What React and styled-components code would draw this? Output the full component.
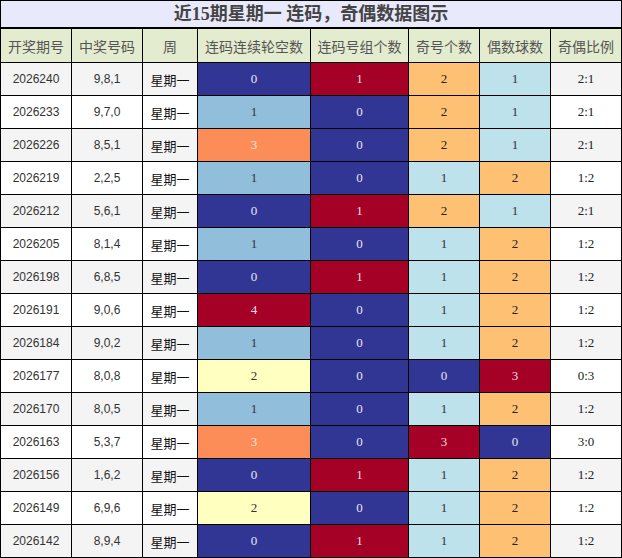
import React from 'react';
import styled, { createGlobalStyle } from 'styled-components';

const GlobalStyle = createGlobalStyle`
    body {
        margin: 0;
        background: #fff;
        font-family: "Liberation Sans", "Noto Sans CJK SC", sans-serif;
    }
`

const colors = {
    blue: { bg: '#313695', fg: '#e6e6f0' },
    sky: { bg: '#91bfdb', fg: '#333' },
    orange: { bg: '#fc8d59', fg: '#f4e4dc' },
    red: { bg: '#a50026', fg: '#eedfe2' },
    yellow: { bg: '#ffffbf', fg: '#333' },
    peach: { bg: '#fec173', fg: '#222' },
    pale: { bg: '#bde2ec', fg: '#333' },
}

// gap count -> colour
const gapColor = { 0: 'blue', 1: 'sky', 2: 'yellow', 3: 'orange', 4: 'red' }
const groupColor = { 0: 'blue', 1: 'red' }
const countColor = { 0: 'blue', 1: 'pale', 2: 'peach', 3: 'red' }

const rows = [
    ['2026240', '9,8,1', 0, 1, 2, 1],
    ['2026233', '9,7,0', 1, 0, 2, 1],
    ['2026226', '8,5,1', 3, 0, 2, 1],
    ['2026219', '2,2,5', 1, 0, 1, 2],
    ['2026212', '5,6,1', 0, 1, 2, 1],
    ['2026205', '8,1,4', 1, 0, 1, 2],
    ['2026198', '6,8,5', 0, 1, 1, 2],
    ['2026191', '9,0,6', 4, 0, 1, 2],
    ['2026184', '9,0,2', 1, 0, 1, 2],
    ['2026177', '8,0,8', 2, 0, 0, 3],
    ['2026170', '8,0,5', 1, 0, 1, 2],
    ['2026163', '5,3,7', 3, 0, 3, 0],
    ['2026156', '1,6,2', 0, 1, 1, 2],
    ['2026149', '6,9,6', 2, 0, 1, 2],
    ['2026142', '8,9,4', 0, 1, 1, 2],
]

const headers = ['开奖期号', '中奖号码', '周', '连码连续轮空数', '连码号组个数', '奇号个数', '偶数球数', '奇偶比例']
const widths = [71, 71, 55, 113, 98, 71, 71, 71]

const Table = styled.table`
    width: 622px;
    table-layout: fixed;
    border-collapse: collapse;
    border: 1px solid #000;
`

const TitleCell = styled.td`
    height: 26px;
    padding: 0;
    background: #e8e9fb;
    border-bottom: 2px solid #000;
    text-align: center;
    font-family: "Liberation Serif", "Noto Sans CJK SC", serif;
    font-weight: bold;
    font-size: 18px;
    color: #444;
    line-height: 25px;
`

const Th = styled.td`
    height: 33px;
    padding: 0;
    background: #e4ecd0;
    border: 1px solid #000;
    text-align: center;
    font-size: 14px;
    color: #555;
    font-weight: normal;
`

const Tr = styled.tr`
    background: ${(p) => (p.$odd ? '#f4f4f4' : '#fff')};
`

const Td = styled.td`
    height: 32px;
    padding: 0;
    border: 1px solid #000;
    text-align: center;
    font-size: 12px;
    color: #333;
`

const WeekTd = styled(Td)`
    font-size: 13px;
    color: #111;
`

const RatioTd = styled(Td)`
    font-family: "Liberation Serif", serif;
    font-size: 13px;
    color: #222;
`

const ColorTd = styled(Td)`
    font-family: "Liberation Serif", serif;
    font-size: 13px;
    background: ${(p) => colors[p.$c].bg};
    color: ${(p) => colors[p.$c].fg};
`

const App = () => {
    return (
        <>
            <GlobalStyle />
            <Table>
                <colgroup>
                    {widths.map((w, i) => <col key={i} style={{ width: w }} />)}
                </colgroup>
                <tbody>
                    <tr>
                        <TitleCell colSpan={8}>近15期星期一 连码，奇偶数据图示</TitleCell>
                    </tr>
                    <tr>
                        {headers.map((h) => <Th key={h}>{h}</Th>)}
                    </tr>
                    {rows.map((r, i) => (
                        <Tr key={r[0]} $odd={i % 2 === 0}>
                            <Td>{r[0]}</Td>
                            <Td>{r[1]}</Td>
                            <WeekTd>星期一</WeekTd>
                            <ColorTd $c={gapColor[r[2]]}>{r[2]}</ColorTd>
                            <ColorTd $c={groupColor[r[3]]}>{r[3]}</ColorTd>
                            <ColorTd $c={countColor[r[4]]}>{r[4]}</ColorTd>
                            <ColorTd $c={countColor[r[5]]}>{r[5]}</ColorTd>
                            <RatioTd>{r[4]}:{r[5]}</RatioTd>
                        </Tr>
                    ))}
                </tbody>
            </Table>
        </>
    );
}

export default App;
